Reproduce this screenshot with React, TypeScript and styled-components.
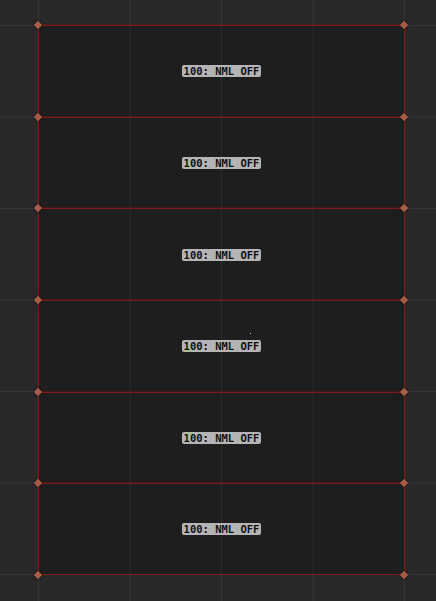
import React from 'react';
import styled, { createGlobalStyle } from 'styled-components';

const GlobalStyle = createGlobalStyle`
  html, body {
    margin: 0;
    padding: 0;
    background: #282828;
  }
  #root {
    width: 436px;
    height: 601px;
  }
`;

const Canvas = styled.div`
  width: 436px;
  height: 601px;
  box-sizing: border-box;
  padding: 25px 0 0 38px;
  background-color: #282828;
  background-image:
    linear-gradient(to right, #363636 1px, transparent 1px),
    linear-gradient(to bottom, #363636 1px, transparent 1px);
  background-size: 91.5px 91.5px;
  background-position: 38px 25px;
  overflow: hidden;
`;

const Frame = styled.div`
  width: 365px;
  display: grid;
  grid-template-rows: repeat(6, 91.67px);
  background-color: #1e1e1e;
  background-image:
    linear-gradient(to right, #2b2b2b 1px, transparent 1px);
  background-size: 91.5px 100%;
  background-position: -1px 0;
  border-left: 1px solid #7e1a1a;
  border-right: 1px solid #7e1a1a;
  box-shadow: -1px 0 0 rgba(110, 20, 20, 0.45), 1px 0 0 rgba(110, 20, 20, 0.45);
`;

const Strip = styled.div`
  position: relative;
  display: flex;
  align-items: center;
  justify-content: center;
  border-top: 1px solid #7e1a1a;
  box-shadow: 0 -1px 0 rgba(110, 20, 20, 0.45);
  &:last-child {
    border-bottom: 1px solid #7e1a1a;
  }
`;

const Handle = styled.span<{ $side: 'left' | 'right'; $edge: 'top' | 'bottom' }>`
  position: absolute;
  ${(p) => (p.$side === 'left' ? 'left: -4px;' : 'right: -3px;')}
  ${(p) => (p.$edge === 'top' ? 'top: -4px;' : 'bottom: -4px;')}
  width: 6px;
  height: 6px;
  background: #a65c45;
  transform: rotate(45deg);
  box-shadow: 0 0 2px rgba(0, 0, 0, 0.9);
  z-index: 2;
`;

const Label = styled.span`
  display: inline-block;
  padding: 0 2px;
  height: 12px;
  line-height: 12px;
  border-radius: 2px;
  background: #b4b4b4;
  color: #101010;
  font-family: 'DejaVu Sans Mono', 'Liberation Mono', monospace;
  font-weight: bold;
  font-size: 10.5px;
  white-space: pre;
`;

const Speck = styled.span`
  position: absolute;
  left: 211px;
  top: 32px;
  width: 1px;
  height: 1px;
  background: #d0d0d0;
`;

const strips = [0, 1, 2, 3, 4, 5];

export default function App() {
  return (
    <>
      <GlobalStyle />
      <Canvas>
        <Frame>
          {strips.map((i) => (
            <Strip key={i}>
              <Handle $side="left" $edge="top" />
              <Handle $side="right" $edge="top" />
              {i === strips.length - 1 && (
                <>
                  <Handle $side="left" $edge="bottom" />
                  <Handle $side="right" $edge="bottom" />
                </>
              )}
              {i === 3 && <Speck />}
              <Label>100: NML OFF</Label>
            </Strip>
          ))}
        </Frame>
      </Canvas>
    </>
  );
}
